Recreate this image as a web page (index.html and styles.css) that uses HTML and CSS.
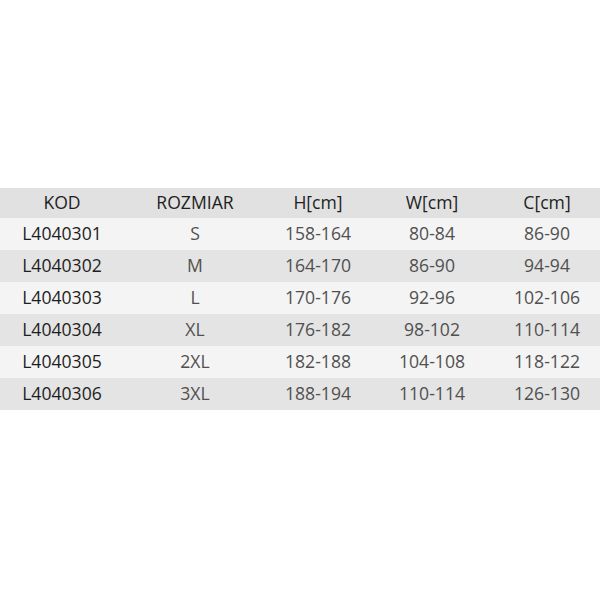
FILE: index.html
```html
<!DOCTYPE html>
<html>
<head>
<meta charset="utf-8">
<link rel="stylesheet" href="styles.css">
</head>
<body>
<div class="page">
  <div class="table">
    <div class="row head">
      <div class="cell">KOD</div><div class="cell">ROZMIAR</div><div class="cell">H[cm]</div><div class="cell">W[cm]</div><div class="cell">C[cm]</div>
    </div>
    <div class="row light">
      <div class="cell code">L4040301</div><div class="cell">S</div><div class="cell">158-164</div><div class="cell">80-84</div><div class="cell">86-90</div>
    </div>
    <div class="row dark">
      <div class="cell code">L4040302</div><div class="cell">M</div><div class="cell">164-170</div><div class="cell">86-90</div><div class="cell">94-94</div>
    </div>
    <div class="row light">
      <div class="cell code">L4040303</div><div class="cell">L</div><div class="cell">170-176</div><div class="cell">92-96</div><div class="cell">102-106</div>
    </div>
    <div class="row dark">
      <div class="cell code">L4040304</div><div class="cell">XL</div><div class="cell">176-182</div><div class="cell">98-102</div><div class="cell">110-114</div>
    </div>
    <div class="row light">
      <div class="cell code">L4040305</div><div class="cell">2XL</div><div class="cell">182-188</div><div class="cell">104-108</div><div class="cell">118-122</div>
    </div>
    <div class="row dark">
      <div class="cell code">L4040306</div><div class="cell">3XL</div><div class="cell">188-194</div><div class="cell">110-114</div><div class="cell">126-130</div>
    </div>
  </div>
</div>
</body>
</html>
```
FILE: styles.css
```css
html, body {
  margin: 0;
  padding: 0;
  background: #ffffff;
}
.page {
  width: 600px;
  height: 600px;
  padding-top: 188px;
  box-sizing: border-box;
  font-family: "Open Sans", "DejaVu Sans", sans-serif;
  font-size: 17.6px;
  font-weight: 500;
}
.table {
  display: flex;
  flex-direction: column;
}
.row {
  display: grid;
  grid-template-columns: 124px 142px 104px 124px 106px;
  height: 32px;
  align-items: center;
  color: #505050;
}
.row.head {
  height: 30px;
  background: #e1e1e1;
  color: #1e1e1e;
}
.row.light {
  background: #f4f4f4;
}
.row.dark {
  background: #e4e4e4;
}
.cell {
  text-align: center;
  white-space: nowrap;
  line-height: 1;
}
.cell.code {
  color: #1e1e1e;
}
```
